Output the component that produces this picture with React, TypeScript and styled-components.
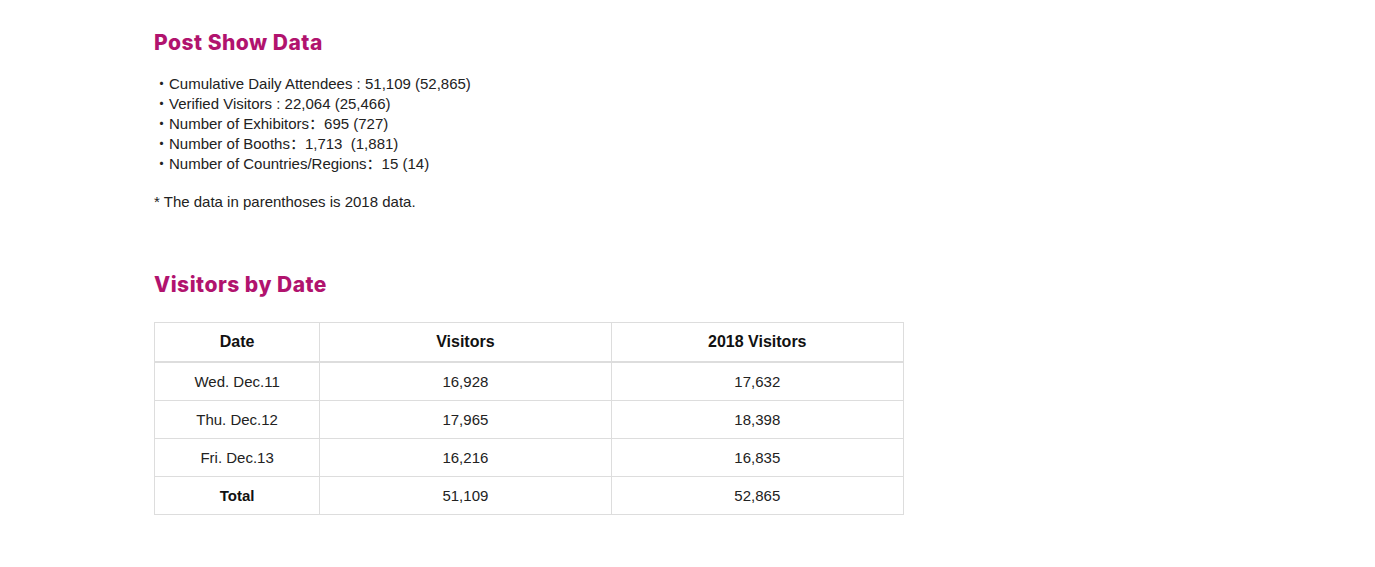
import styled, { createGlobalStyle } from 'styled-components';

const GlobalStyle = createGlobalStyle`
  body {
    margin: 0;
    background: #fff;
    font-family: 'Liberation Sans', Arial, 'Noto Sans CJK SC', sans-serif;
    color: #222;
  }
`;

const Page = styled.div`
  padding: 31px 0 40px 154px;
`;

const SectionTitle = styled.h2<{ $gap?: number }>`
  margin: ${p => p.$gap ?? 0}px 0 0;
  font-family: Inter, 'Open Sans', sans-serif;
  font-weight: 800;
  font-size: 21px;
  letter-spacing: 0.5px;
  line-height: 24px;
  color: #b1136e;
`;

const StatList = styled.ul`
  list-style: none;
  margin: 18px 0 0;
  padding: 0;
  font-size: 15px;
  line-height: 20px;
`;

const StatItem = styled.li`
  height: 20px;
  white-space: nowrap;
  &::before {
    content: '・';
    font-family: 'Noto Sans CJK SC', sans-serif;
  }
`;

const Note = styled.p`
  margin: 19px 0 0;
  font-size: 15px;
  line-height: 20px;
`;

const Table = styled.table`
  margin-top: 25px;
  width: 750px;
  border-collapse: collapse;
  font-size: 15px;
  color: #222;
`;

const HeadCell = styled.th<{ $width: number }>`
  width: ${p => p.$width}px;
  height: 38px;
  border: 1px solid #ddd;
  border-bottom: 2px solid #ddd;
  font-size: 16px;
  font-weight: bold;
  color: #111;
  text-align: center;
  padding: 0;
`;

const Cell = styled.td<{ $bold?: boolean }>`
  height: 37px;
  border: 1px solid #ddd;
  text-align: center;
  padding: 0;
  font-weight: ${p => (p.$bold ? 'bold' : 'normal')};
  color: ${p => (p.$bold ? '#111' : '#222')};
`;

const stats = [
  'Cumulative Daily Attendees : 51,109 (52,865)',
  'Verified Visitors : 22,064 (25,466)',
  'Number of Exhibitors：695 (727)',
  'Number of Booths：1,713\u00a0 (1,881)',
  'Number of Countries/Regions：15 (14)',
];

const rows = [
  { date: 'Wed. Dec.11', visitors: '16,928', prev: '17,632' },
  { date: 'Thu. Dec.12', visitors: '17,965', prev: '18,398' },
  { date: 'Fri. Dec.13', visitors: '16,216', prev: '16,835' },
];

export default function App() {
  return (
    <>
      <GlobalStyle />
      <Page>
        <SectionTitle>Post Show Data</SectionTitle>
        <StatList>
          {stats.map(s => (
            <StatItem key={s}>{s}</StatItem>
          ))}
        </StatList>
        <Note>* The data in parenthoses is 2018 data.</Note>

        <SectionTitle $gap={61}>Visitors by Date</SectionTitle>
        <Table>
          <thead>
            <tr>
              <HeadCell $width={165}>Date</HeadCell>
              <HeadCell $width={292}>Visitors</HeadCell>
              <HeadCell $width={293}>2018 Visitors</HeadCell>
            </tr>
          </thead>
          <tbody>
            {rows.map(r => (
              <tr key={r.date}>
                <Cell>{r.date}</Cell>
                <Cell>{r.visitors}</Cell>
                <Cell>{r.prev}</Cell>
              </tr>
            ))}
            <tr>
              <Cell $bold>Total</Cell>
              <Cell>51,109</Cell>
              <Cell>52,865</Cell>
            </tr>
          </tbody>
        </Table>
      </Page>
    </>
  );
}
